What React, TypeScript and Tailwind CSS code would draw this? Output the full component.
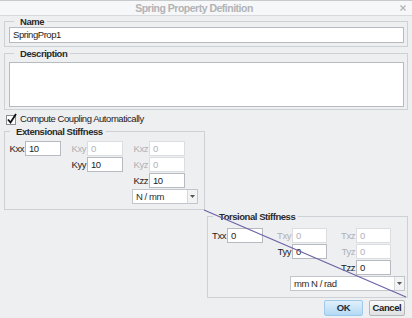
import React from "react";

const face = "font-['Liberation_Sans',Arial,sans-serif]";
const txt = "text-[9.5px] tracking-[-0.45px]";

function Box({ value, disabled, className = "" }: { value: string; disabled?: boolean; className?: string }) {
  return (
    <div
      className={`flex h-[15px] items-center border bg-white pl-[3px] leading-none ${txt} ${
        disabled ? "border-[#dcdde0] text-[#b0b2b6]" : "border-[#b7bac0] text-[#1e1e1e]"
      } ${className}`}
    >
      {value}
    </div>
  );
}

function Label({ text, disabled }: { text?: string; disabled?: boolean }) {
  return (
    <span
      className={`flex h-[15px] items-center justify-end pr-[1px] leading-none ${txt} ${
        disabled ? "text-[#aeb0b4]" : "text-[#1c1c1c]"
      }`}
    >
      {text}
    </span>
  );
}

function Combo({ value, className = "" }: { value: string; className?: string }) {
  return (
    <div className={`flex h-[15px] border border-[#c2c5c9] bg-white ${className}`}>
      <span className={`flex flex-1 items-center pl-[3px] leading-none text-[#2c2c2c] ${txt}`}>{value}</span>
      <span className="flex w-[10px] items-center justify-center border-l border-[#d6d8db] bg-[#f2f3f4]">
        <svg width="5" height="3" viewBox="0 0 5 3">
          <path d="M0 0h5L2.5 3z" fill="#555" />
        </svg>
      </span>
    </div>
  );
}

function Group({ title, className = "", children }: { title: string; className?: string; children: React.ReactNode }) {
  return (
    <fieldset className={`border border-[#cdd0d4] ${className}`}>
      <legend className="ml-[5px] pl-[6px] pr-[3px] text-[9.5px] font-bold leading-[11px] tracking-[-0.45px] text-[#2a2a2a]">
        {title}
      </legend>
      {children}
    </fieldset>
  );
}

export default function App() {
  return (
    <div className={`relative flex h-[318px] w-[412px] flex-col overflow-hidden bg-[#eeeff1] ${face}`}>
      {/* title bar */}
      <div className="flex h-[16px] items-center border-y border-t-[#c9cacc] border-b-[#d8d9dc] bg-[#f6f7f8]">
        <span className="flex-1 pr-[12px] text-center text-[10.5px] font-bold leading-none tracking-[-0.5px] text-[#b2b3b6]">
          Spring Property Definition
        </span>
        <svg width="6" height="6" viewBox="0 0 6 6" className="mr-[6px]">
          <path d="M0.5 0.5l5 5M5.5 0.5l-5 5" stroke="#b4b5b8" strokeWidth="1.4" />
        </svg>
      </div>

      <Group title="Name" className="mx-[4px] pb-[3px] pl-[4px] pr-[3px]">
        <Box value="SpringProp1" className="h-[16px]" />
      </Group>

      <Group title="Description" className="mx-[4px] mt-[1px] pb-[2px] pl-[4px] pr-[3px] pt-[3px]">
        <div className="h-[45px] border border-[#b7bac0] bg-white" />
      </Group>

      <div className="mt-[2px] flex h-[14px] items-center pl-[6px]">
        <svg width="11" height="12" viewBox="0 0 11 12">
          <rect x="0.5" y="2.5" width="9" height="9" fill="#fff" stroke="#8c8e92" />
          <path d="M2 6.5l2.5 3L10 1" fill="none" stroke="#111" strokeWidth="1.8" />
        </svg>
        <span className={`ml-[3px] leading-none text-[#222] ${txt}`}>Compute Coupling Automatically</span>
      </div>

      <Group title="Extensional Stiffness" className="ml-[4px] w-[201px] pb-[5px] pt-[4px]">
        <div className="grid grid-cols-[20px_36px_26px_36px_26px_36px] gap-y-[1px]">
          <Label text="Kxx" />
          <Box value="10" />
          <Label text="Kxy" disabled />
          <Box value="0" disabled />
          <Label text="Kxz" disabled />
          <Box value="0" disabled />

          <Label />
          <span />
          <Label text="Kyy" />
          <Box value="10" />
          <Label text="Kyz" disabled />
          <Box value="0" disabled />

          <Label />
          <span />
          <span />
          <span />
          <Label text="Kzz" />
          <Box value="10" />

          <Combo value="N / mm" className="col-span-2 col-start-5 ml-[9px] w-[66px]" />
        </div>
      </Group>

      <Group title="Torsional Stiffness" className="mr-[4px] mt-[1px] w-[201px] self-end pb-[6px] pt-[6px]">
        <div className="grid grid-cols-[19px_36px_29px_35px_29px_35px] gap-y-[1px]">
          <Label text="Txx" />
          <Box value="0" />
          <Label text="Txy" disabled />
          <Box value="0" disabled />
          <Label text="Txz" disabled />
          <Box value="0" disabled />

          <Label />
          <span />
          <Label text="Tyy" />
          <Box value="0" />
          <Label text="Tyz" disabled />
          <Box value="0" disabled />

          <Label />
          <span />
          <span />
          <span />
          <Label text="Tzz" />
          <Box value="0" />

          <Combo value="mm N / rad" className="col-span-4 col-start-3 ml-[27px] w-[115px]" />
        </div>
      </Group>

      <div className="mt-[2px] flex justify-end gap-[6px] pr-[7px]">
        <button className="h-[16px] w-[39px] rounded-[2px] border border-[#9ecbec] bg-gradient-to-b from-[#e0f0fc] to-[#b3d9f4] text-[9.5px] font-bold leading-none tracking-[-0.4px] text-[#1f2d3e]">
          OK
        </button>
        <button className="h-[16px] w-[36px] rounded-[2px] border border-[#b6b7b9] bg-gradient-to-b from-[#fbfbfb] to-[#dfe0e2] text-[9.5px] font-bold leading-none tracking-[-0.4px] text-[#222]">
          Cancel
        </button>
      </div>

      {/* annotation stroke drawn over the dialog */}
      <svg className="pointer-events-none absolute left-0 top-0" width="412" height="318">
        <line x1="204" y1="210" x2="406" y2="297" stroke="#6e62a6" strokeWidth="1.3" />
      </svg>
    </div>
  );
}
